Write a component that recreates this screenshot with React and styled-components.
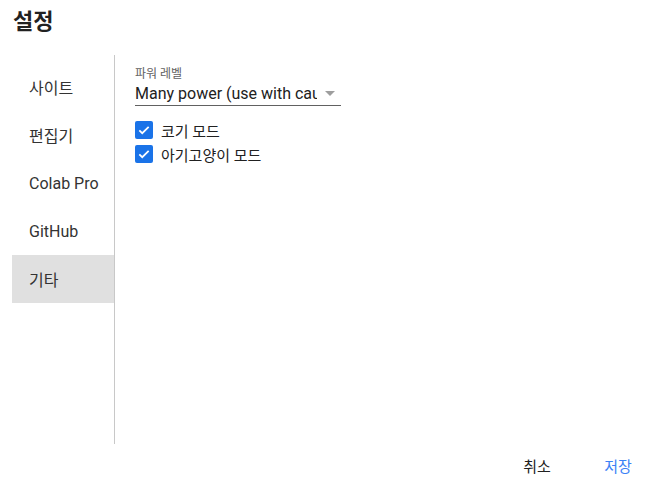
import React from "react";
import styled, { createGlobalStyle } from "styled-components";

const Global = createGlobalStyle`
  html, body { margin: 0; padding: 0; background: #fff; }
  body { font-family: Roboto, "Noto Sans CJK KR", sans-serif; color: #212121; }
  * { box-sizing: border-box; }
`;

const Dialog = styled.div`
  width: 669px;
  height: 487px;
  display: flex;
  flex-direction: column;
  padding: 0 0 0 12px;
`;

const Title = styled.h2`
  margin: 0;
  padding: 7px 0 0 1px;
  height: 55px;
  font-size: 22px;
  line-height: 30px;
  font-weight: 700;
  color: #212121;
`;

const Body = styled.div`
  display: flex;
  height: 389px;
`;

const Sidebar = styled.nav`
  width: 103px;
  border-right: 1px solid #c8c8c8;
  padding-top: 8px;
  display: flex;
  flex-direction: column;
`;

const NavItem = styled.div`
  height: 48px;
  display: flex;
  align-items: center;
  padding-left: 17px;
  font-size: 16px;
  color: #333;
  background: ${(p) => (p.$active ? "#e0e0e0" : "transparent")};
`;

const Content = styled.div`
  padding: 11px 0 0 20px;
  display: flex;
  flex-direction: column;
`;

const Label = styled.div`
  font-size: 12px;
  line-height: 16px;
  color: #616161;
`;

const Select = styled.div`
  width: 206px;
  height: 24px;
  display: flex;
  align-items: center;
  justify-content: space-between;
  border-bottom: 1px solid #616161;
  font-size: 16px;
  color: #212121;
  margin-bottom: 12px;
`;

const SelectText = styled.span`
  white-space: nowrap;
  overflow: hidden;
  width: 182px;
`;

const Arrow = styled.span`
  width: 0;
  height: 0;
  border-left: 5px solid transparent;
  border-right: 5px solid transparent;
  border-top: 5px solid #9e9e9e;
  margin-right: 6px;
`;

const CheckRow = styled.label`
  display: flex;
  align-items: center;
  gap: 8px;
  height: 24px;
  font-size: 15px;
  color: #212121;
`;

const Box = styled.span`
  width: 18px;
  height: 18px;
  border-radius: 2px;
  background: #1a73e8;
  display: flex;
  align-items: center;
  justify-content: center;
`;

const Footer = styled.div`
  flex: 1;
  display: flex;
  justify-content: flex-end;
  align-items: center;
  padding-right: 19px;
  gap: 17px;
`;

const Button = styled.button`
  border: none;
  background: none;
  font-family: inherit;
  font-size: 15px;
  min-width: 64px;
  height: 36px;
  padding: 0 8px;
  color: ${(p) => (p.$primary ? "#3b82f6" : "#212121")};
`;

const Check = () => (
  <svg width="14" height="14" viewBox="0 0 24 24">
    <path d="M4 12.5l5 5L20 6.5" fill="none" stroke="#fff" strokeWidth="3" />
  </svg>
);

const items = ["사이트", "편집기", "Colab Pro", "GitHub", "기타"];

export default function App() {
  return (
    <>
      <Global />
      <Dialog>
        <Title>설정</Title>
        <Body>
          <Sidebar>
            {items.map((t) => (
              <NavItem key={t} $active={t === "기타"}>
                {t}
              </NavItem>
            ))}
          </Sidebar>
          <Content>
            <Label>파워 레벨</Label>
            <Select>
              <SelectText>Many power (use with caution)</SelectText>
              <Arrow />
            </Select>
            <CheckRow>
              <Box>
                <Check />
              </Box>
              코기 모드
            </CheckRow>
            <CheckRow>
              <Box>
                <Check />
              </Box>
              아기고양이 모드
            </CheckRow>
          </Content>
        </Body>
        <Footer>
          <Button>취소</Button>
          <Button $primary>저장</Button>
        </Footer>
      </Dialog>
    </>
  );
}
